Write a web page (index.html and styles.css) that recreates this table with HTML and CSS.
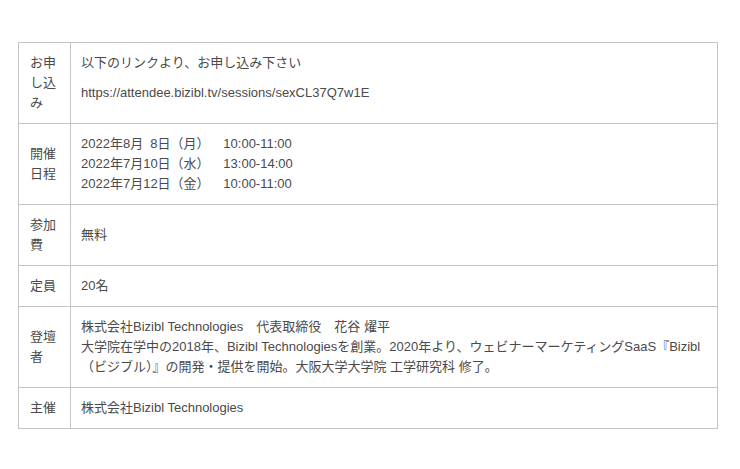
FILE: index.html
```html
<!DOCTYPE html>
<html lang="ja">
<head>
<meta charset="utf-8">
<link rel="stylesheet" href="styles.css">
</head>
<body>
<table class="info">
  <tr>
    <th>お申し込み</th>
    <td><p class="para">以下のリンクより、お申し込み下さい</p><p class="para">https://attendee.bizibl.tv/sessions/sexCL37Q7w1E</p></td>
  </tr>
  <tr>
    <th>開催日程</th>
    <td>2022年8月&nbsp;&nbsp;8日（月）　&nbsp;&nbsp;10:00-11:00<br>2022年7月10日（水）　&nbsp;&nbsp;13:00-14:00<br>2022年7月12日（金）　&nbsp;&nbsp;10:00-11:00</td>
  </tr>
  <tr>
    <th>参加費</th>
    <td>無料</td>
  </tr>
  <tr>
    <th>定員</th>
    <td>20名</td>
  </tr>
  <tr>
    <th>登壇者</th>
    <td>株式会社Bizibl Technologies　代表取締役　花谷 燿平<br>大学院在学中の2018年、Bizibl Technologiesを創業。2020年より、ウェビナーマーケティングSaaS『Bizibl（ビジブル）』の開発・提供を開始。大阪大学大学院 工学研究科 修了。</td>
  </tr>
  <tr>
    <th>主催</th>
    <td>株式会社Bizibl Technologies</td>
  </tr>
</table>
</body>
</html>
```

FILE: styles.css
```css
html, body {
  margin: 0;
  padding: 0;
  background: #fff;
}
body {
  padding: 42px 0 0 18px;
  font-family: "Liberation Sans", "Noto Sans CJK JP", sans-serif;
  font-size: 13px;
  line-height: 20px;
  color: #4a4a4a;
}
.info {
  width: 700px;
  border-collapse: collapse;
}
.info th, .info td {
  border: 1px solid #c4c4c4;
  vertical-align: middle;
  text-align: left;
  font-weight: normal;
}
.info th {
  width: 28px;
  padding: 10px 12px 10px 11px;
}
.info td {
  padding: 10px;
}
.para {
  margin: 0 0 10px;
}
```
